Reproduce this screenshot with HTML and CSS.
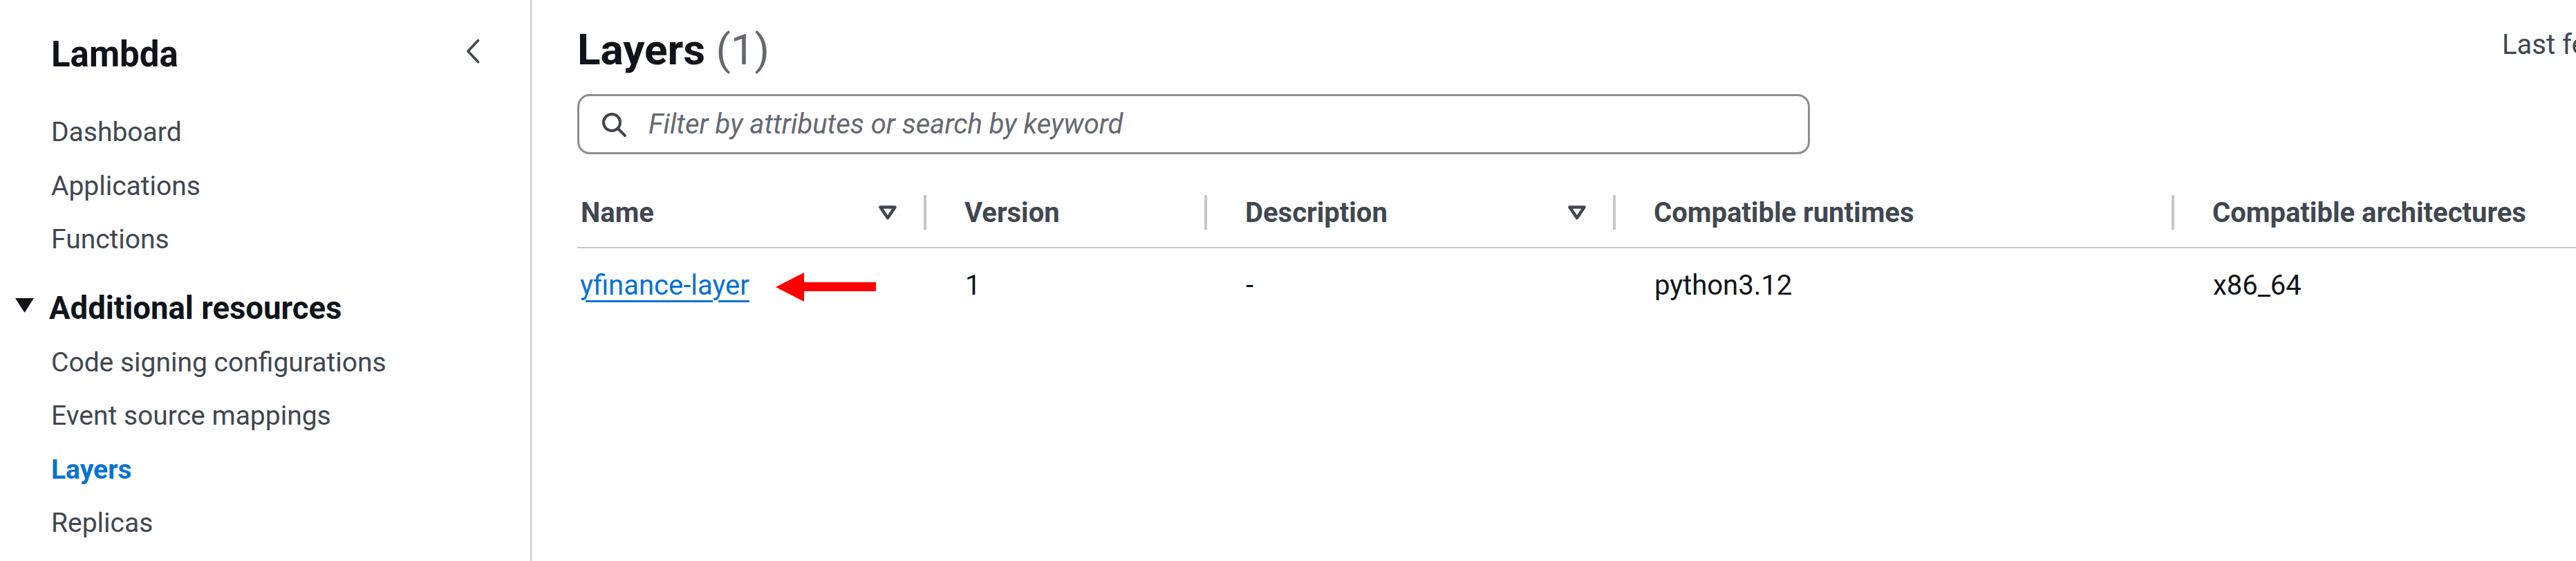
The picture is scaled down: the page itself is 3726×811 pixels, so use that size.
FILE: index.html
```html
<!DOCTYPE html>
<html lang="en">
<head>
<meta charset="utf-8">
<title>Layers - Lambda</title>
<link rel="stylesheet" href="styles.css">
</head>
<body>
<div class="layout">
  <nav class="sidebar">
    <div class="side-header">
      <span class="side-title">Lambda</span>
      <svg class="chevron" viewBox="0 0 22 36" width="22" height="36"><path d="M18.5 2.5 L4 18 L18.5 33.5" fill="none" stroke="#424650" stroke-width="3.6" stroke-linecap="round" stroke-linejoin="round"/></svg>
    </div>
    <ul class="nav-list">
      <li>Dashboard</li>
      <li>Applications</li>
      <li>Functions</li>
    </ul>
    <div class="nav-section">
      <svg class="caret" viewBox="0 0 27 21" width="27" height="21"><path d="M0 0 H27 L13.5 21 Z" fill="#0f141a"/></svg>
      <span>Additional resources</span>
    </div>
    <ul class="nav-list sub">
      <li>Code signing configurations</li>
      <li>Event source mappings</li>
      <li class="active">Layers</li>
      <li>Replicas</li>
    </ul>
  </nav>

  <main class="main">
    <div class="title-row">
      <h1 class="page-title">Layers <span class="count">(1)</span></h1>
      <div class="fetch">Last fetched</div>
    </div>

    <div class="search">
      <svg class="search-icon" viewBox="0 0 38 38" width="38" height="38"><circle cx="16" cy="16" r="12" fill="none" stroke="#424650" stroke-width="4"/><path d="M25 25 L35 35" stroke="#424650" stroke-width="4" stroke-linecap="round"/></svg>
      <span class="placeholder">Filter by attributes or search by keyword</span>
    </div>

    <div class="table">
      <div class="row head">
        <div class="cell first sortable"><span>Name</span><svg class="sort" viewBox="0 0 28 22" width="28" height="22"><path d="M3.5 3.5 H24.5 L14 19 Z" fill="none" stroke="#424650" stroke-width="4.6" stroke-linejoin="round"/></svg></div>
        <div class="cell">Version</div>
        <div class="cell sortable"><span>Description</span><svg class="sort" viewBox="0 0 28 22" width="28" height="22"><path d="M3.5 3.5 H24.5 L14 19 Z" fill="none" stroke="#424650" stroke-width="4.6" stroke-linejoin="round"/></svg></div>
        <div class="cell">Compatible runtimes</div>
        <div class="cell">Compatible architectures</div>
      </div>
      <div class="row body">
        <div class="cell first"><a class="link" href="#">yfinance-layer</a><svg class="arrow" viewBox="0 0 145 42" width="145" height="42"><polygon points="0,21 41,0 41,14 145,14 145,27 41,27 41,42" fill="#ff0000"/></svg></div>
        <div class="cell">1</div>
        <div class="cell">-</div>
        <div class="cell">python3.12</div>
        <div class="cell">x86_64</div>
      </div>
    </div>
  </main>
</div>
</body>
</html>
```

FILE: styles.css
```css
html, body {
  margin: 0;
  padding: 0;
  background: #ffffff;
  overflow: hidden;
}

body {
  font-family: Roboto, "Liberation Sans", sans-serif;
  color: #0f141a;
}

.layout {
  display: flex;
  width: 3726px;
  height: 811px;
}

/* ---------- sidebar ---------- */
.sidebar {
  box-sizing: border-box;
  width: 769px;
  flex: 0 0 769px;
  height: 811px;
  border-right: 2px solid #c6c6cd;
  padding-top: 44px;
}

.side-header {
  display: flex;
  justify-content: space-between;
  align-items: flex-start;
  padding: 0 72px 0 74px;
}

.side-title {
  font-size: 51px;
  font-weight: 700;
  line-height: 70px;
  color: #0f141a;
}

.chevron {
  margin-top: 12px;
}

.nav-list {
  list-style: none;
  margin: 39px 0 0;
  padding: 0 0 0 74px;
}

.nav-list li {
  font-size: 39px;
  line-height: 77.5px;
  color: #414750;
}

.nav-list.sub {
  margin-top: 4px;
}

.nav-list li.active {
  color: #0972d3;
  font-weight: 700;
}

.nav-section {
  display: flex;
  align-items: center;
  gap: 22px;
  margin-top: 24px;
  padding-left: 22px;
  font-size: 45.5px;
  font-weight: 700;
  line-height: 72px;
  color: #0f141a;
}

.caret {
  margin-bottom: 8px;
}

/* ---------- main ---------- */
.main {
  flex: 1;
  min-width: 0;
  padding: 32px 0 0 66px;
}

.title-row {
  display: flex;
  justify-content: space-between;
  align-items: flex-start;
}

.page-title {
  margin: 0;
  font-size: 62px;
  font-weight: 700;
  line-height: 80px;
  color: #0f141a;
}

.count {
  font-weight: 400;
  color: #656871;
}

.fetch {
  flex: 0 0 107px;
  width: 107px;
  white-space: nowrap;
  font-size: 40px;
  line-height: 66px;
  color: #414750;
}

.search {
  box-sizing: border-box;
  width: 1783px;
  height: 87px;
  margin-top: 24px;
  border: 3px solid #8c8c94;
  border-radius: 18px;
  display: flex;
  align-items: center;
  padding-left: 31px;
  gap: 31px;
}

.placeholder {
  font-size: 40px;
  font-style: italic;
  color: #656871;
}

/* ---------- table ---------- */
.table {
  margin-top: 59px;
}

.row {
  display: grid;
  grid-template-columns: 501px 406px 591px 808px 1fr;
}

.row.head {
  padding-bottom: 25px;
  border-bottom: 2px solid #c6c6cd;
}

.row.head .cell {
  height: 50px;
  display: flex;
  align-items: center;
  font-size: 40px;
  font-weight: 700;
  color: #414750;
  border-left: 4px solid #c6c6cd;
  padding-left: 55px;
  white-space: nowrap;
}

.row.head .cell.first {
  border-left: none;
  padding-left: 5px;
}

.row.head .cell.sortable {
  justify-content: space-between;
  padding-right: 38px;
}

.row.body {
  padding-top: 29px;
}

.row.body .cell {
  font-size: 40px;
  line-height: 50px;
  color: #0f141a;
  padding-left: 60px;
  white-space: nowrap;
}

.row.body .cell.first {
  padding-left: 4px;
}

.link {
  color: #0972d3;
  text-decoration: underline;
  text-decoration-thickness: 3px;
  text-underline-offset: 8px;
}

.arrow {
  vertical-align: middle;
  margin-left: 38px;
}
```
